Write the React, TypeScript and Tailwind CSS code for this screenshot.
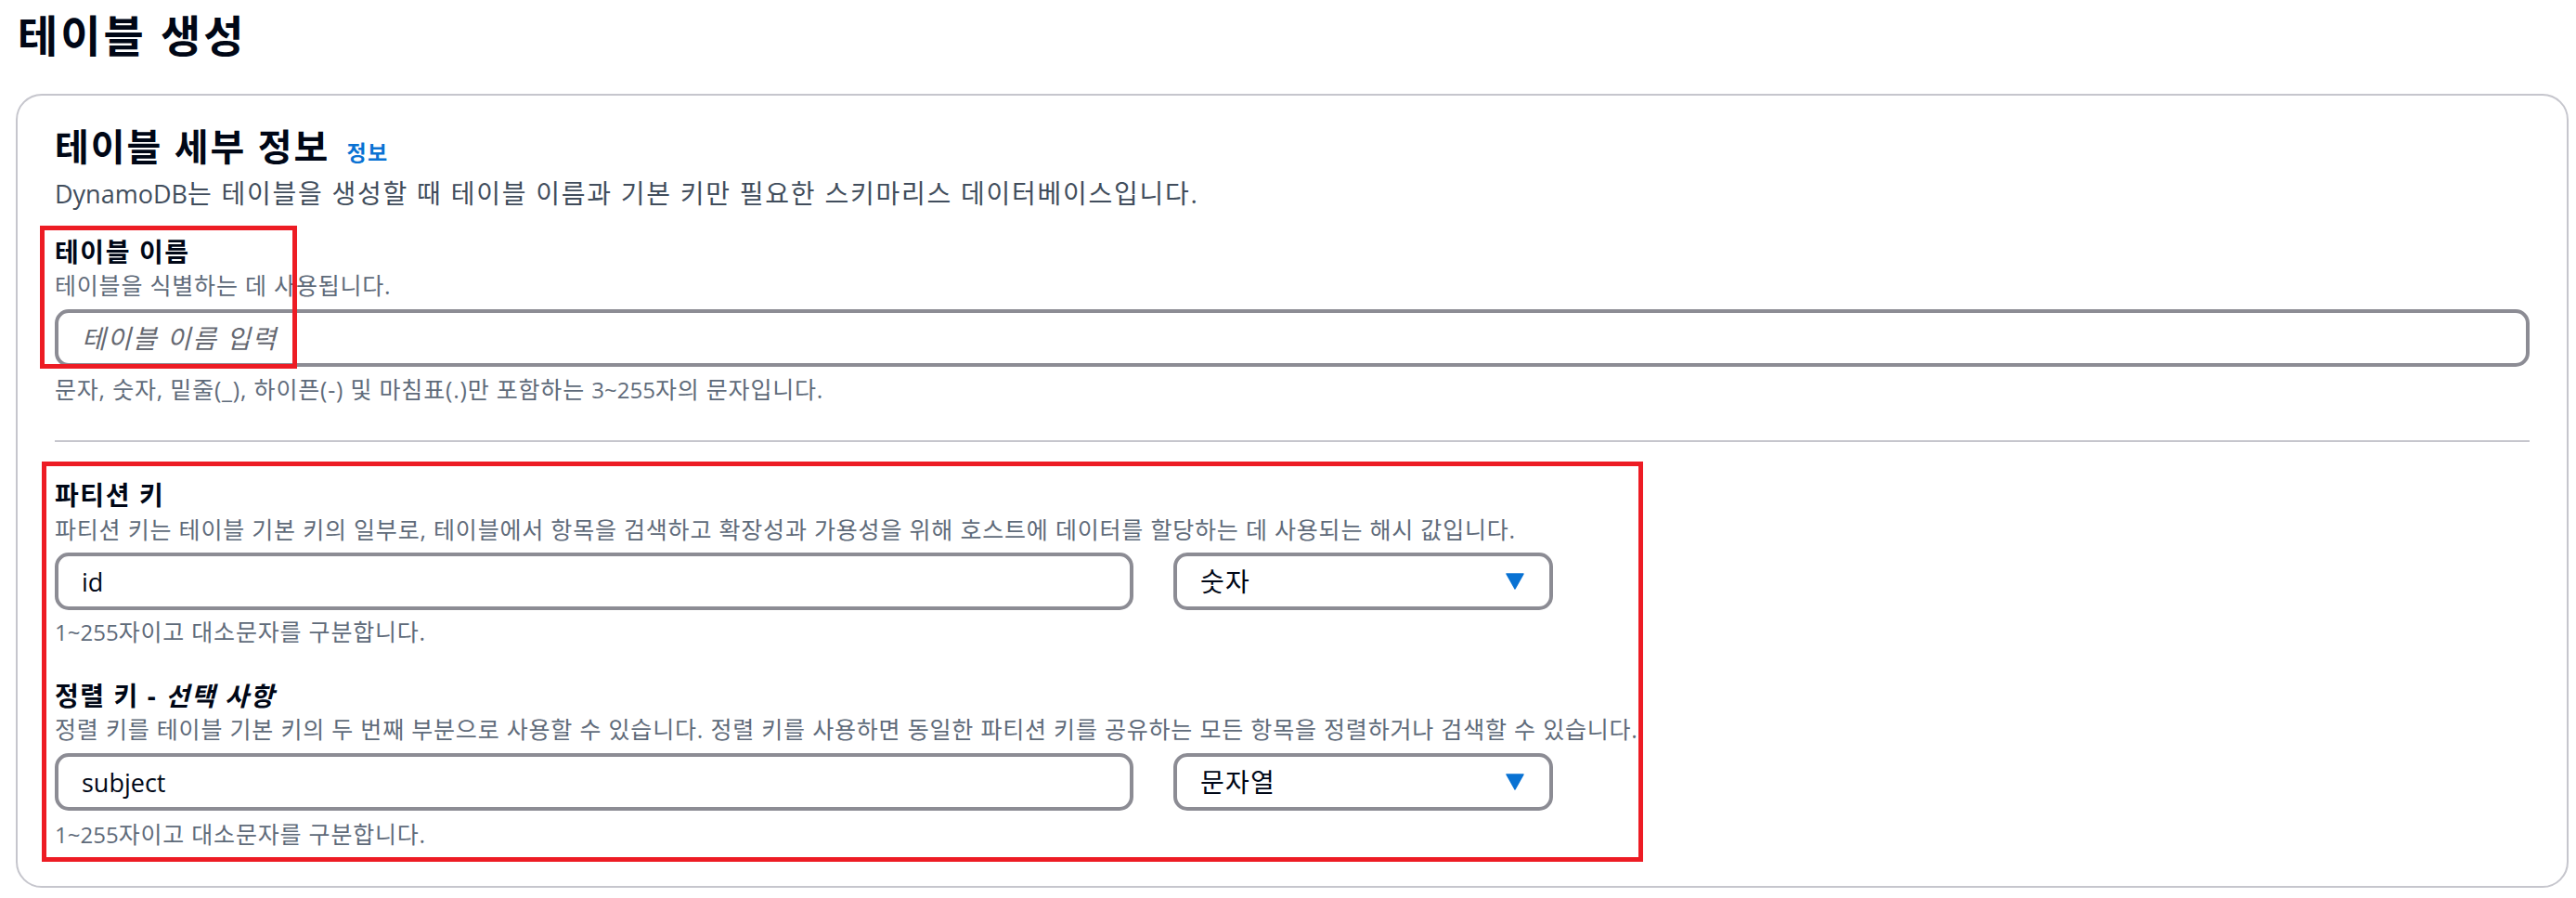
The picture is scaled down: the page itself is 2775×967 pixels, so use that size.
import React from "react";

function Caret() {
  return (
    <svg width="20" height="18" viewBox="0 0 20 18" aria-hidden="true">
      <polygon points="1,1 19,1 10,17" fill="#0972d3" stroke="#0972d3" strokeWidth="1.5" strokeLinejoin="round" />
    </svg>
  );
}

function Select({ value }: { value: string }) {
  return (
    <div className="w-[409px] h-[62px] shrink-0 border-[4px] border-[#8c8c94] rounded-[15px] bg-white flex items-center justify-between pl-[25px] pr-[27px]">
      <span className="text-[28px] tracking-[1.2px] text-[#000716]">{value}</span>
      <Caret />
    </div>
  );
}

function TextInput({ value, placeholder, full }: { value?: string; placeholder?: string; full?: boolean }) {
  return (
    <input
      readOnly
      value={value ?? ""}
      placeholder={placeholder}
      className={
        (full ? "w-full " : "w-[1162px] shrink-0 ") +
        "h-[62px] block border-[4px] border-[#8c8c94] rounded-[15px] bg-white pl-[25px] pr-[20px] text-[27px] text-[#000716] outline-none placeholder:italic placeholder:text-[28px] placeholder:tracking-[1.8px] placeholder:text-[#656871]"
      }
    />
  );
}

const small = "text-[25px] leading-[32px] tracking-[0.8px] text-[#5f6b7a]";
const label = "text-[28px] leading-[36px] tracking-[1.6px] font-bold";

export default function App() {
  return (
    <div className="h-[967px] overflow-hidden w-full bg-white pl-[17px] pr-[8px] pt-[10px] font-['Open_Sans','Noto_Sans_CJK_KR',sans-serif] text-[#000716]">
      <h1 className="text-[47px] leading-[56px] tracking-[3px] font-bold pl-[2px]">테이블 생성</h1>

      <div className="relative mt-[35px] border-2 border-[#c6c6cd] rounded-[28px] bg-white pt-[31px] pb-[39px] px-[40px]">
        <div className="flex items-baseline">
          <h2 className="text-[40px] leading-[48px] tracking-[2px] font-bold">테이블 세부 정보</h2>
          <span className="ml-[18px] text-[23px] tracking-[1.5px] font-bold text-[#0972d3]">정보</span>
        </div>
        <p className="mt-[8px] text-[28px] leading-[36px] tracking-[1.75px] text-[#414d5c]">
          <span className="text-[27px] tracking-normal">DynamoDB</span>는 테이블을 생성할 때 테이블 이름과 기본 키만 필요한 스키마리스 데이터베이스입니다.
        </p>

        <div className="mt-[26px]">
          <div className={label}>테이블 이름</div>
          <div className={"mt-[2px] " + small}>테이블을 식별하는 데 사용됩니다.</div>
          <div className="mt-[10px]">
            <TextInput full placeholder="테이블 이름 입력" />
          </div>
          <div className={"mt-[8px] " + small}>
            문자, 숫자, 밑줄(_), 하이픈(-) 및 마침표(.)만 포함하는 <span className="text-[24px] tracking-normal">3~255</span>자의 문자입니다.
          </div>
        </div>

        <div className="mt-[38px] h-[2px] bg-[#c6c6cd]" />

        <div className="mt-[39px]">
          <div className={label}>파티션 키</div>
          <div className={"mt-[3px] " + small}>
            파티션 키는 테이블 기본 키의 일부로, 테이블에서 항목을 검색하고 확장성과 가용성을 위해 호스트에 데이터를 할당하는 데 사용되는 해시 값입니다.
          </div>
          <div className="mt-[9px] flex gap-[43px]">
            <TextInput value="id" />
            <Select value="숫자" />
          </div>
          <div className={"mt-[7px] " + small}>
            <span className="text-[24px] tracking-normal">1~255</span>자이고 대소문자를 구분합니다.
          </div>
        </div>

        <div className="mt-[34px]">
          <div className={label}>
            정렬 키 - <span className="italic">선택 사항</span>
          </div>
          <div className={"mt-[2px] " + small}>
            정렬 키를 테이블 기본 키의 두 번째 부분으로 사용할 수 있습니다. 정렬 키를 사용하면 동일한 파티션 키를 공유하는 모든 항목을 정렬하거나 검색할 수 있습니다.
          </div>
          <div className="mt-[10px] flex gap-[43px]">
            <TextInput value="subject" />
            <Select value="문자열" />
          </div>
          <div className={"mt-[9px] " + small}>
            <span className="text-[24px] tracking-normal">1~255</span>자이고 대소문자를 구분합니다.
          </div>
        </div>

        <div className="pointer-events-none absolute left-[24px] top-[140px] w-[277px] h-[154px] border-[5px] border-[#ed1c24]" />
        <div className="pointer-events-none absolute left-[26px] top-[394px] w-[1725px] h-[431px] border-[5px] border-[#ed1c24]" />
      </div>
    </div>
  );
}
